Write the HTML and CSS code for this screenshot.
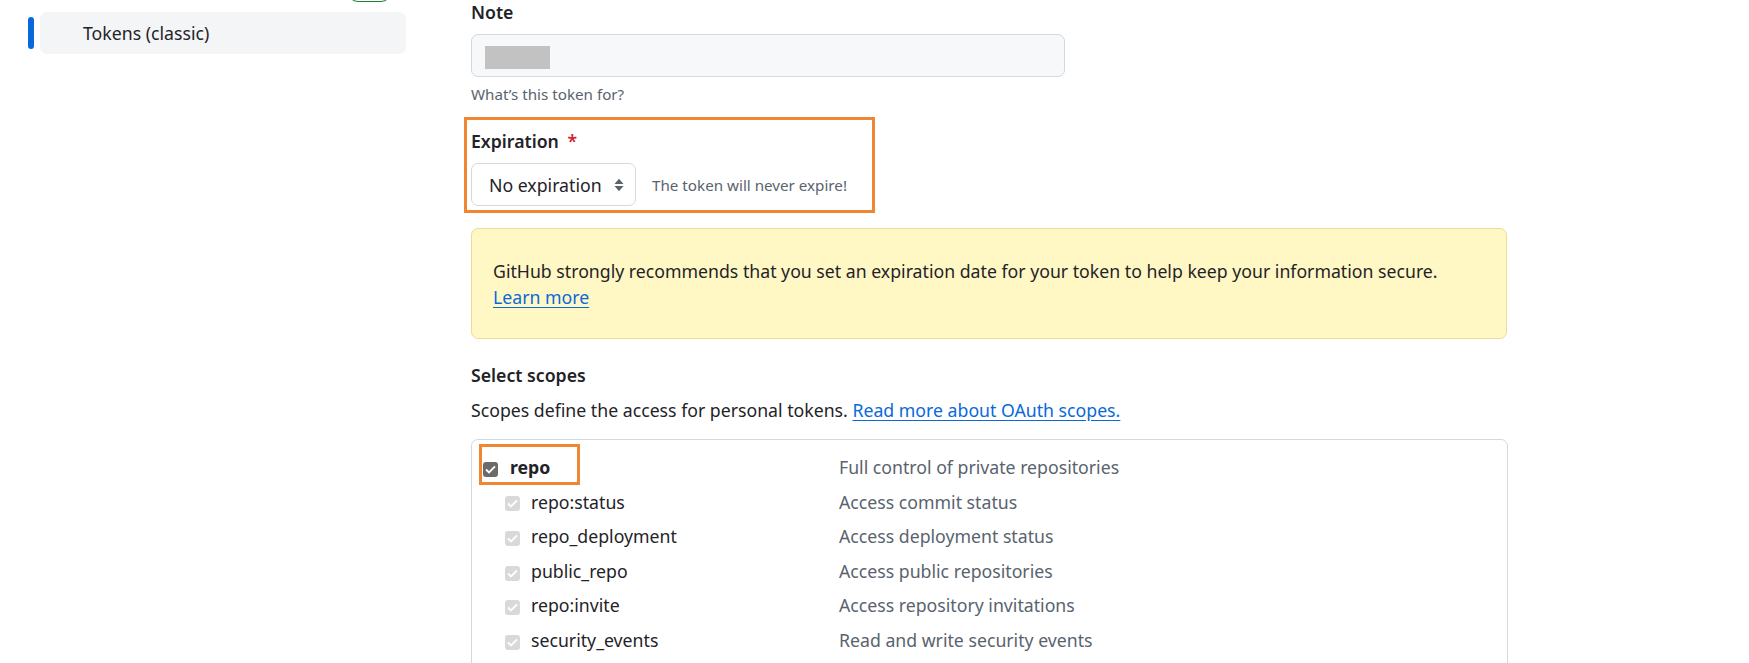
FILE: index.html
```html
<!DOCTYPE html>
<html lang="en">
<head>
<meta charset="utf-8">
<title>New personal access token (classic)</title>
<link rel="stylesheet" href="styles.css">
</head>
<body>
<div class="layout">
  <nav class="sidebar">
    <div class="prev-row"><span class="beta-pill"></span></div>
    <div class="nav-row">
      <span class="nav-bar"></span>
      <a class="nav-item">Tokens (classic)</a>
    </div>
  </nav>

  <main class="main">
    <div class="form-group">
      <label class="label">Note</label>
      <div class="input"><span class="redacted"></span></div>
      <p class="hint">What’s this token for?</p>
    </div>

    <div class="annot-box">
      <label class="label">Expiration <span class="req">*</span></label>
      <div class="exp-row">
        <div class="select">
          <span>No expiration</span>
          <svg class="updown" width="10" height="14" viewBox="0 0 10 14"><path d="M0.5 6L5 0.8 9.5 6Z M0.5 8L9.5 8 5 13.2Z" fill="#59636e"/></svg>
        </div>
        <span class="exp-note">The token will never expire!</span>
      </div>
    </div>

    <div class="flash">
      <p>GitHub strongly recommends that you set an expiration date for your token to help keep your information secure.</p>
      <p><a class="link">Learn more</a></p>
    </div>

    <h3 class="section-title">Select scopes</h3>
    <p class="section-desc">Scopes define the access for personal tokens. <a class="link">Read more about OAuth scopes.</a></p>

    <div class="scopes">
      <div class="scope-row">
        <span class="annot-inline"></span>
        <div class="scope-name parent">
          <span class="cb cb-dark"><svg width="11" height="9" viewBox="0 0 11 9"><path d="M1 4.5L4 7.5 10 1.3" fill="none" stroke="#fff" stroke-width="1.8"/></svg></span>
          <strong>repo</strong>
        </div>
        <div class="scope-desc">Full control of private repositories</div>
      </div>
      <div class="scope-row">
        <div class="scope-name child">
          <span class="cb cb-light"><svg width="11" height="9" viewBox="0 0 11 9"><path d="M1 4.5L4 7.5 10 1.3" fill="none" stroke="#fff" stroke-width="1.8"/></svg></span>
          <span>repo:status</span>
        </div>
        <div class="scope-desc">Access commit status</div>
      </div>
      <div class="scope-row">
        <div class="scope-name child">
          <span class="cb cb-light"><svg width="11" height="9" viewBox="0 0 11 9"><path d="M1 4.5L4 7.5 10 1.3" fill="none" stroke="#fff" stroke-width="1.8"/></svg></span>
          <span>repo_deployment</span>
        </div>
        <div class="scope-desc">Access deployment status</div>
      </div>
      <div class="scope-row">
        <div class="scope-name child">
          <span class="cb cb-light"><svg width="11" height="9" viewBox="0 0 11 9"><path d="M1 4.5L4 7.5 10 1.3" fill="none" stroke="#fff" stroke-width="1.8"/></svg></span>
          <span>public_repo</span>
        </div>
        <div class="scope-desc">Access public repositories</div>
      </div>
      <div class="scope-row">
        <div class="scope-name child">
          <span class="cb cb-light"><svg width="11" height="9" viewBox="0 0 11 9"><path d="M1 4.5L4 7.5 10 1.3" fill="none" stroke="#fff" stroke-width="1.8"/></svg></span>
          <span>repo:invite</span>
        </div>
        <div class="scope-desc">Access repository invitations</div>
      </div>
      <div class="scope-row">
        <div class="scope-name child">
          <span class="cb cb-light"><svg width="11" height="9" viewBox="0 0 11 9"><path d="M1 4.5L4 7.5 10 1.3" fill="none" stroke="#fff" stroke-width="1.8"/></svg></span>
          <span>security_events</span>
        </div>
        <div class="scope-desc">Read and write security events</div>
      </div>
      <div class="scope-row empty"></div>
    </div>
  </main>
</div>
</body>
</html>
```
FILE: styles.css
```css
* { box-sizing: border-box; }
html, body { margin: 0; padding: 0; background: #ffffff; }
body {
  font-family: "Noto Sans", "Open Sans", sans-serif;
  font-size: 17.7px;
  line-height: 26px;
  color: #1f2328;
  height: 663px;
  overflow: hidden;
}
p { margin: 0; }
a { text-decoration: none; }

.layout { display: flex; align-items: flex-start; }

/* Sidebar */
.sidebar { width: 406px; flex: none; }
.prev-row {
  display: flex;
  justify-content: flex-end;
  padding-right: 14px;
  margin-top: -20px;
  height: 22px;
}
.beta-pill {
  width: 45px;
  height: 22px;
  border: 1px solid #1a7f37;
  border-radius: 12px;
}
.nav-row {
  display: flex;
  align-items: center;
  gap: 6px;
  margin-top: 10px;
  padding-left: 28px;
}
.nav-bar {
  width: 6px;
  height: 32px;
  border-radius: 6px;
  background: #0969da;
  flex: none;
}
.nav-item {
  flex: 1;
  height: 42px;
  display: flex;
  align-items: center;
  padding-left: 43px;
  background: #f4f5f7;
  border-radius: 7px;
  color: #1f2328;
  line-height: 24px;
}

/* Main */
.main {
  margin-left: 65px;
  width: 1037px;
  flex: none;
}
.label {
  display: block;
  font-weight: 600;
  line-height: 24px;
}
.req { color: #d1242f; margin-left: 4px; }
.input {
  margin-top: 10px;
  width: 594px;
  height: 43px;
  background: #f6f8fa;
  border: 1px solid #d1d9e0;
  border-radius: 7px;
  padding: 11px 13px;
}
.redacted {
  display: block;
  width: 65px;
  height: 23px;
  background: #c2c2c2;
}
.hint {
  margin-top: 6px;
  font-size: 15.2px;
  line-height: 22px;
  color: #59636e;
}

/* annotated expiration group */
.annot-box {
  margin-top: 12px;
  margin-left: -7px;
  width: 411px;
  border: 3px solid #f08532;
  padding: 9px 0 4px 4px;
}
.exp-row {
  margin-top: 10px;
  display: flex;
  align-items: center;
  gap: 16px;
}
.select {
  width: 165px;
  height: 43px;
  border: 1px solid #d1d9e0;
  border-radius: 7px;
  background: #ffffff;
  display: flex;
  align-items: center;
  justify-content: space-between;
  padding: 0 11px 0 17px;
  line-height: 24px;
}
.updown { display: block; }
.exp-note {
  font-size: 15.2px;
  line-height: 22px;
  color: #59636e;
}

/* flash */
.flash {
  margin-top: 15px;
  width: 1036px;
  background: #fff8c5;
  border: 1px solid #ecdc98;
  border-radius: 7px;
  padding: 29px 21px 28px;
}
.link {
  color: #0969da;
  text-decoration: underline;
  text-underline-offset: 3px;
}

.section-title {
  margin: 24px 0 0;
  font-size: 17.7px;
  font-weight: 600;
  line-height: 24px;
}
.section-desc { margin-top: 10px; }

/* scopes */
.scopes {
  margin-top: 16px;
  width: 1037px;
  border: 1px solid #d1d9e0;
  border-radius: 7px;
  padding-top: 10px;
}
.scope-row {
  position: relative;
  display: grid;
  grid-template-columns: 367px 1fr;
  height: 34.6px;
  line-height: 34.6px;
  align-items: center;
}
.scope-name { display: flex; align-items: center; }
.scope-name.parent { padding-left: 11px; gap: 12px; }
.scope-name.child { padding-left: 33px; gap: 11px; }
.scope-name strong { font-weight: 700; }
.scope-desc { color: #59636e; }
.cb {
  width: 15px;
  height: 15px;
  border-radius: 3px;
  display: flex;
  align-items: center;
  justify-content: center;
  margin-top: 4px;
  flex: none;
}
.cb-dark { background: #6b6b6b; }
.cb-light { background: #d9d9d9; }
.annot-inline {
  position: absolute;
  left: 7px;
  top: -6px;
  width: 101px;
  height: 41px;
  border: 3px solid #f08532;
  pointer-events: none;
}
```
